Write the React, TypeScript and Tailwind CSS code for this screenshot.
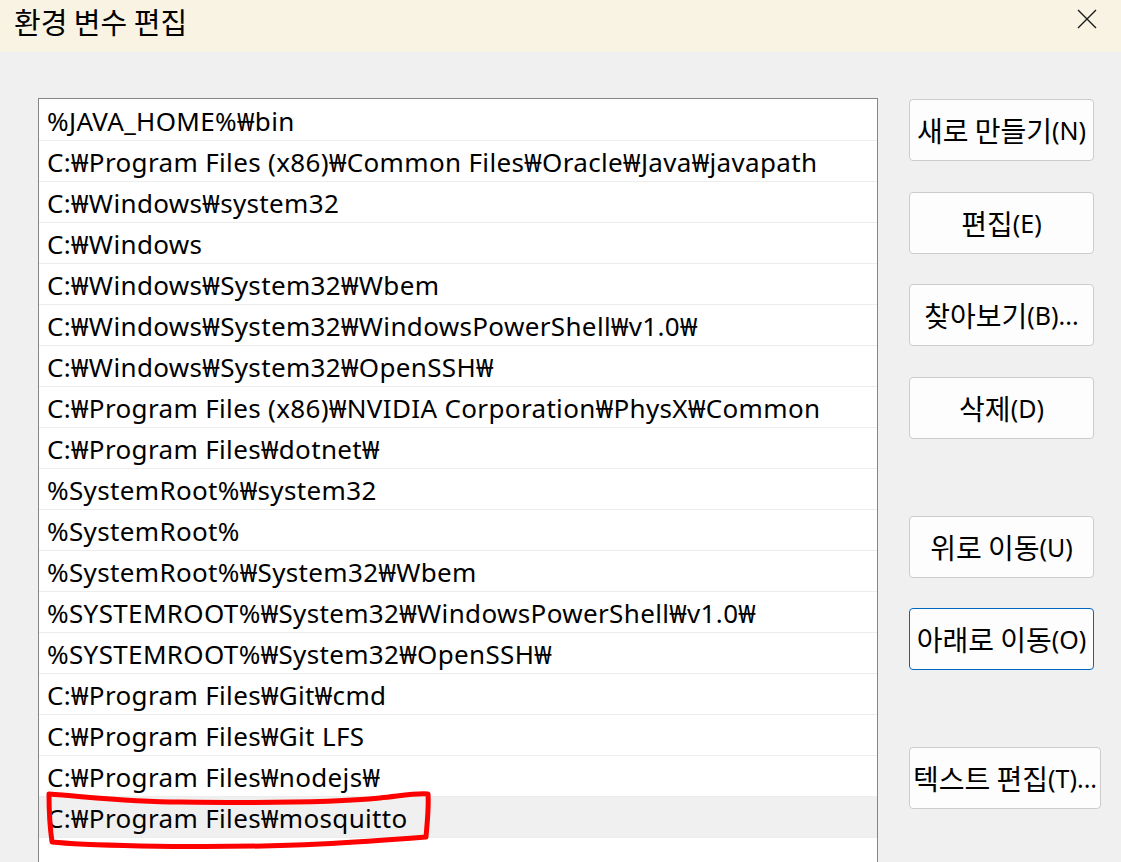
import React from "react";

const rows = [
  "%JAVA_HOME%₩bin",
  "C:₩Program Files (x86)₩Common Files₩Oracle₩Java₩javapath",
  "C:₩Windows₩system32",
  "C:₩Windows",
  "C:₩Windows₩System32₩Wbem",
  "C:₩Windows₩System32₩WindowsPowerShell₩v1.0₩",
  "C:₩Windows₩System32₩OpenSSH₩",
  "C:₩Program Files (x86)₩NVIDIA Corporation₩PhysX₩Common",
  "C:₩Program Files₩dotnet₩",
  "%SystemRoot%₩system32",
  "%SystemRoot%",
  "%SystemRoot%₩System32₩Wbem",
  "%SYSTEMROOT%₩System32₩WindowsPowerShell₩v1.0₩",
  "%SYSTEMROOT%₩System32₩OpenSSH₩",
  "C:₩Program Files₩Git₩cmd",
  "C:₩Program Files₩Git LFS",
  "C:₩Program Files₩nodejs₩",
  "C:₩Program Files₩mosquitto",
];

const latin = { fontFamily: '"Noto Sans", "Noto Sans CJK KR", sans-serif' };
const kr = { fontFamily: '"Noto Sans CJK KR", sans-serif' };

function Btn({
  ko,
  en,
  className = "",
  focused = false,
}: {
  ko: string;
  en: string;
  className?: string;
  focused?: boolean;
}) {
  return (
    <div
      className={
        "h-[62px] rounded-[4px] bg-[#fdfdfd] flex items-center justify-center text-black whitespace-nowrap overflow-hidden " +
        (focused ? "border border-[#0067c0] " : "border border-[#cccccc] ") +
        className
      }
    >
      <span className="text-[28px] leading-none" style={kr}>
        {ko}
      </span>
      <span className="text-[25px] leading-none" style={latin}>
        {en}
      </span>
    </div>
  );
}

export default function App() {
  return (
    <div
      className="relative w-[1121px] h-[862px] overflow-hidden bg-[#f0f0f0] text-black"
      style={latin}
    >
      <div className="h-[52px] bg-[#f8f3e2] flex items-center justify-between pl-[14px] pr-[24px]">
        <span className="text-[29px] leading-none -mt-[10px]" style={kr}>
          환경 변수 편집
        </span>
        <svg width="20" height="20" viewBox="0 0 20 20" className="-mt-[14px]">
          <path d="M1 1 L19 19 M19 1 L1 19" stroke="#1a1a1a" strokeWidth="1.4" />
        </svg>
      </div>
      <div className="flex pl-[38px] pt-[46px]">
        <div className="w-[840px] h-[800px] border border-[#858585] bg-white pt-[1px]">
          {rows.map((r, i) => (
            <div
              key={i}
              className={
                "h-[41px] border-b border-[#ededed] pl-[8px] flex items-center text-[26px] tracking-[0.35px] whitespace-nowrap " +
                (i === rows.length - 1 ? "bg-[#f0f0f0]" : "")
              }
            >
              <span className="leading-none mt-[2px]">{r}</span>
            </div>
          ))}
        </div>
        <div className="flex flex-col ml-[31px] pt-[1px]">
          <Btn ko="새로 만들기" en="(N)" className="w-[185px]" />
          <Btn ko="편집" en="(E)" className="w-[185px] mt-[31px]" />
          <Btn ko="찾아보기" en="(B)..." className="w-[185px] mt-[30px]" />
          <Btn ko="삭제" en="(D)" className="w-[185px] mt-[31px]" />
          <Btn ko="위로 이동" en="(U)" className="w-[185px] mt-[77px]" />
          <Btn ko="아래로 이동" en="(O)" className="w-[185px] mt-[30px]" focused />
          <Btn ko="텍스트 편집" en="(T)..." className="w-[192px] mt-[77px]" />
        </div>
      </div>
      <svg
        className="absolute left-0 top-0 pointer-events-none"
        width="1121"
        height="862"
        viewBox="0 0 1121 862"
      >
        <path
          d="M49 794 C90 797 130 802 180 802 C260 803 330 803 380 798 C400 796 415 793 428 794 C429 808 427 824 426 837 C400 839 360 842 320 844 C260 847 200 847 140 846 C100 845 70 844 52 842 C50 828 49 810 49 794"
          fill="none"
          stroke="#ff0000"
          strokeWidth="5"
          strokeLinecap="round"
          strokeLinejoin="round"
        />
      </svg>
    </div>
  );
}
